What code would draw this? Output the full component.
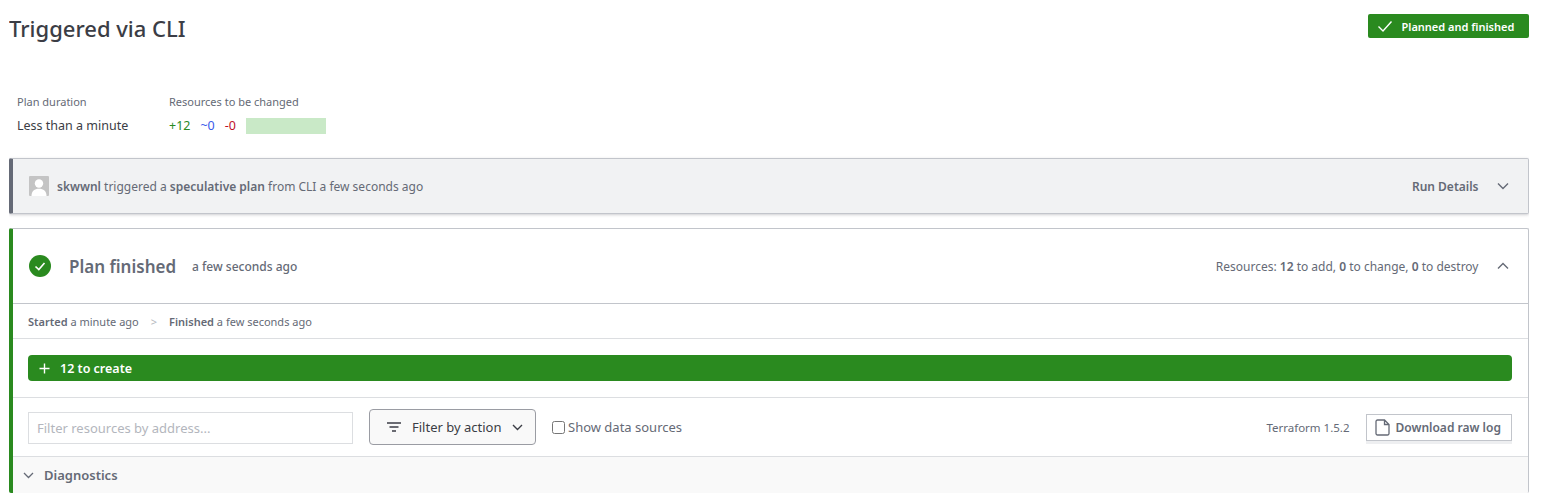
<script>
  const statsLabels = ['Plan duration', 'Resources to be changed'];
</script>

<div class="page">
  <header class="top">
    <h1>Triggered via CLI</h1>
    <span class="badge">
      <svg width="16" height="16" viewBox="0 0 16 16" fill="none"><path d="M1.5 8.5 6 13 14.5 3.5" stroke="#fff" stroke-width="1.4"/></svg>
      <span>Planned and finished</span>
    </span>
  </header>

  <section class="stats">
    <div class="stat first">
      <div class="lbl">{statsLabels[0]}</div>
      <div class="val">Less than a minute</div>
    </div>
    <div class="stat">
      <div class="lbl">{statsLabels[1]}</div>
      <div class="val changes">
        <span class="add">+12</span><span class="chg">~0</span><span class="del">-0</span><span class="bar"></span>
      </div>
    </div>
  </section>

  <section class="card run">
    <div class="who">
      <svg class="avatar" width="20" height="20" viewBox="0 0 20 20"><rect width="20" height="20" rx="1" fill="#c4c4c4"/><circle cx="10" cy="7.5" r="4.2" fill="#fff"/><path d="M2.5 20c0-5 3-7.2 7.500-7.200s7.500 2.200 7.500 7.200z" fill="#fff"/></svg>
      <span><b>skwwnl</b> triggered a <b>speculative plan</b> from CLI a few seconds ago</span>
    </div>
    <div class="right">
      <b class="details">Run Details</b>
      <svg class="chev" width="12" height="8" viewBox="0 0 12 8" fill="none"><path d="M1 1.500 6 6.500 11 1.500" stroke="#656a76" stroke-width="1.400"/></svg>
    </div>
  </section>

  <section class="card plan">
    <div class="plan-head">
      <div class="ph-left">
        <svg width="22" height="22" viewBox="0 0 22 22"><circle cx="11" cy="11" r="11" fill="#2a8a1f"/><path d="M6.500 11.500 9.800 14.500 15.500 8" fill="none" stroke="#fff" stroke-width="1.600"/></svg>
        <h2>Plan finished</h2>
        <span class="ago">a few seconds ago</span>
      </div>
      <div class="right">
        <span class="res">Resources: <b>12</b> to add, <b>0</b> to change, <b>0</b> to destroy</span>
        <svg class="chev" width="12" height="8" viewBox="0 0 12 8" fill="none"><path d="M1 6.500 6 1.500 11 6.500" stroke="#656a76" stroke-width="1.400"/></svg>
      </div>
    </div>

    <div class="timeline">
      <span><b>Started</b> a minute ago</span>
      <i>&gt;</i>
      <span><b>Finished</b> a few seconds ago</span>
    </div>

    <div class="create-row">
      <div class="create">
        <svg width="11" height="11" viewBox="0 0 11 11"><path d="M5.500 0.500v10M0.500 5.500h10" stroke="#fff" stroke-width="1.400"/></svg>
        <span>12 to create</span>
      </div>
    </div>

    <div class="filters">
      <input class="address" type="text" placeholder="Filter resources by address..." />
      <button class="action">
        <svg width="14" height="10" viewBox="0 0 14 10"><path d="M0 1h14M2.500 5h9M5 9h4" stroke="#3b3d45" stroke-width="1.300"/></svg>
        <span>Filter by action</span>
        <svg width="11" height="7" viewBox="0 0 11 7" fill="none"><path d="M1 1 5.500 5.500 10 1" stroke="#3b3d45" stroke-width="1.400"/></svg>
      </button>
      <label class="ds"><input type="checkbox" /><span>Show data sources</span></label>
      <div class="tail">
        <span class="tf">Terraform 1.5.2</span>
        <button class="download">
          <svg width="15" height="17" viewBox="0 0 15 17" fill="none"><path d="M1 2.500a1.500 1.500 0 0 1 1.500-1.500H9.500L14 5.500V14.500a1.500 1.500 0 0 1-1.500 1.500h-10a1.500 1.500 0 0 1-1.500-1.500z M9.500 1v4.500H14" stroke="#656a76" stroke-width="1.300"/></svg>
          <span>Download raw log</span>
        </button>
      </div>
    </div>

    <div class="diag">
      <svg width="11" height="7" viewBox="0 0 11 7" fill="none"><path d="M1 1 5.500 5.500 10 1" stroke="#656a76" stroke-width="1.300"/></svg>
      <b>Diagnostics</b>
    </div>
  </section>
</div>

<style>
  :global(body) { margin: 0; background: #fff; overflow: hidden; }
  .page {
    width: 1519.500px;
    margin-left: 9px;
    height: 493px;
    overflow: hidden;
    font-family: "Noto Sans", "Open Sans", sans-serif;
    font-size: 12px;
    color: #656a76;
  }
  b { font-weight: 600; }
  .top { display: flex; justify-content: space-between; align-items: flex-start; height: 95px; }
  h1 { margin: 12px 0 0; font-size: 22px; line-height: 32px; font-weight: 500; color: #3b3d45; }
  .badge {
    margin-top: 14px; height: 24px; width: 161px; box-sizing: border-box;
    display: flex; align-items: center; gap: 9px; padding-left: 9px;
    background: #2a8a1f; color: #fff; border-radius: 2px; font-size: 11px; font-weight: 600;
  }
  .stats { display: flex; padding-left: 8px; height: 63px; }
  .stat.first { width: 152px; }
  .lbl { font-size: 11px; line-height: 14px; color: #656a76; }
  .val { margin-top: 8px; font-size: 12.500px; line-height: 18px; color: #3b3d45; display: flex; align-items: center; }
  .changes span { margin-right: 10px; }
  .add { color: #2a8a1f; } .chg { color: #3a5bea; } .del { color: #c00f2a; }
  .changes .bar { width: 80px; height: 16px; background: #c9e9c7; margin: 0; }

  .card {
    box-sizing: border-box;
    border: 1px solid #c2c5cb;
    border-radius: 2px;
  }
  .run {
    height: 56px; background: #f1f2f3; border-left: 4px solid #656a76;
    box-shadow: 0 1px 3px rgba(60,60,70,.25);
    display: flex; justify-content: space-between; align-items: center;
    padding: 0 19px 0 16px;
    margin-bottom: 14px;
  }
  .who { display: flex; align-items: center; gap: 8px; }
  .who b, .details { color: #656a76; }
  .details { font-weight: 600; }
  .right { display: flex; align-items: center; gap: 18px; }
  .plan {
    border-left: 4px solid #2a8a1f; border-bottom: 0; height: 265px; overflow: hidden;
  }
  .plan-head {
    height: 75px; box-sizing: border-box; padding: 0 19px 0 16px;
    display: flex; justify-content: space-between; align-items: center;
    border-bottom: 1px solid #c2c5cb;
  }
  .ph-left { display: flex; align-items: center; }
  h2 { margin: 0 16px 0 18px; font-size: 17px; font-weight: 600; color: #656a76; }
  .ago { font-size: 12px; font-weight: 500; }
  .timeline {
    height: 35px; box-sizing: border-box; padding-left: 15px; font-size: 11px;
    display: flex; align-items: center; border-bottom: 1px solid #dcdee1;
  }
  .timeline i { font-style: normal; color: #b5b8be; margin: 0 12px; }
  .create-row { height: 59px; box-sizing: border-box; padding: 16px 16px 0 15px; border-bottom: 1px solid #dcdee1; }
  .create {
    height: 26px; background: #2a8a1f; border-radius: 4px; color: #fff;
    display: flex; align-items: center; gap: 10px; padding-left: 11px;
    font-size: 12.500px; font-weight: 600;
  }
  .filters {
    height: 59px; box-sizing: border-box; border-bottom: 1px solid #dcdee1;
    display: flex; align-items: center; padding: 0 16px 0 15px;
  }
  .address {
    width: 325px; height: 32px; box-sizing: border-box; padding: 0 8px;
    border: 1px solid #dcdee1; font: inherit; font-size: 13px; color: #3b3d45; outline: 0;
    margin-top: 2px;
  }
  .address::placeholder { color: #b3b6bd; }
  .action {
    margin-left: 16px; width: 167px; height: 36px; box-sizing: border-box;
    display: flex; align-items: center; gap: 11px; padding: 0 11px 0 17px;
    border: 1px solid #9a9ca3; border-radius: 4px; background: #f9f9f9;
    font: inherit; font-size: 13px; color: #3b3d45;
  }
  .ds { display: flex; align-items: center; gap: 3px; margin-left: 16px; font-size: 13px; }
  .ds input { margin: 0; width: 13px; height: 13px; }
  .tail { margin-left: auto; display: flex; align-items: center; gap: 16px; }
  .tf { font-size: 11.500px; }
  .download {
    width: 146px; height: 27px; box-sizing: border-box; display: flex; align-items: center; gap: 6px;
    padding: 0 8px; border: 1px solid #c2c5cb; background: #fff; font: inherit; font-size: 12px; font-weight: 600; color: #656a76;
    box-shadow: 0 3px 0 #eeeff1;
  }
  .diag { height: 40px; background: #f9f9f9; display: flex; align-items: center; gap: 10px; padding: 0 0 0 10px; font-size: 13px; padding-bottom: 4px; box-sizing: border-box; }
</style>
